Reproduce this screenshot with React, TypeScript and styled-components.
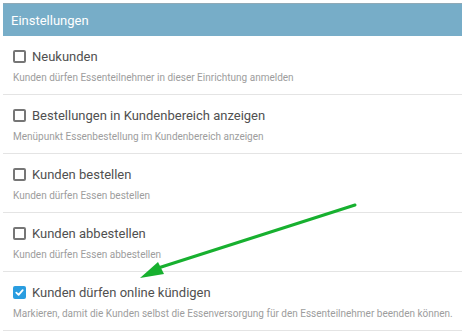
import styled, { createGlobalStyle } from 'styled-components'

const GlobalStyle = createGlobalStyle`
  body {
    margin: 0;
    background: #ffffff;
    font-family: Roboto, "Liberation Sans", sans-serif;
  }
`

const Page = styled.div`
  position: relative;
  width: 462px;
  height: 336px;
  overflow: hidden;
  padding: 3px 0 0 3px;
  box-sizing: border-box;
`

const Header = styled.div`
  height: 33px;
  display: flex;
  align-items: center;
  padding-left: 8px;
  background: #77adc8;
  border-top: 1px solid #8fa9b6;
  box-sizing: border-box;
  color: #ffffff;
  font-size: 13px;
`

const Row = styled.div`
  height: 59px;
  display: flex;
  flex-direction: column;
  justify-content: center;
  gap: 8px;
  padding: 2px 0 0 10px;
  border-bottom: 1px solid #e4e4e4;
  box-sizing: border-box;
`

const LabelLine = styled.label`
  display: flex;
  align-items: center;
  gap: 6px;
  color: #505050;
  font-size: 13px;
`

const Box = styled.span<{ $checked?: boolean }>`
  width: 13px;
  height: 13px;
  box-sizing: border-box;
  border-radius: 2px;
  display: flex;
  align-items: center;
  justify-content: center;
  border: ${(p) => (p.$checked ? 'none' : '2px solid #767676')};
  background: ${(p) => (p.$checked ? '#2a9de0' : '#ffffff')};
`

const Description = styled.div`
  color: #9d9d9d;
  font-size: 10px;
`

const Arrow = styled.svg`
  position: absolute;
  left: 0;
  top: 0;
  pointer-events: none;
`

interface Setting {
  label: string
  text: string
  checked?: boolean
}

const settings: Setting[] = [
  { label: 'Neukunden', text: 'Kunden dürfen Essenteilnehmer in dieser Einrichtung anmelden' },
  { label: 'Bestellungen in Kundenbereich anzeigen', text: 'Menüpunkt Essenbestellung im Kundenbereich anzeigen' },
  { label: 'Kunden bestellen', text: 'Kunden dürfen Essen bestellen' },
  { label: 'Kunden abbestellen', text: 'Kunden dürfen Essen abbestellen' },
  {
    label: 'Kunden dürfen online kündigen',
    text: 'Markieren, damit die Kunden selbst die Essenversorgung für den Essenteilnehmer beenden können.',
    checked: true,
  },
]

const Checkbox = ({ checked }: { checked?: boolean }) => (
  <Box $checked={checked}>
    {checked && (
      <svg width="9" height="9" viewBox="0 0 9 9">
        <path d="M1.3 4.6 L3.6 6.8 L7.7 2.2" fill="none" stroke="#fff" strokeWidth="1.8" strokeLinecap="round" strokeLinejoin="round" />
      </svg>
    )}
  </Box>
)

export default function App() {
  return (
    <>
      <GlobalStyle />
      <Page>
        <Header>Einstellungen</Header>
        {settings.map((s) => (
          <Row key={s.label}>
            <LabelLine>
              <Checkbox checked={s.checked} />
              {s.label}
            </LabelLine>
            <Description>{s.text}</Description>
          </Row>
        ))}
        <Arrow width="462" height="336" viewBox="0 0 462 336">
          <line x1="355" y1="205" x2="155" y2="269" stroke="#17b02f" strokeWidth="3" strokeLinecap="round" />
          <polygon points="140,278 158,262 164,274" fill="#17b02f" />
        </Arrow>
      </Page>
    </>
  )
}
